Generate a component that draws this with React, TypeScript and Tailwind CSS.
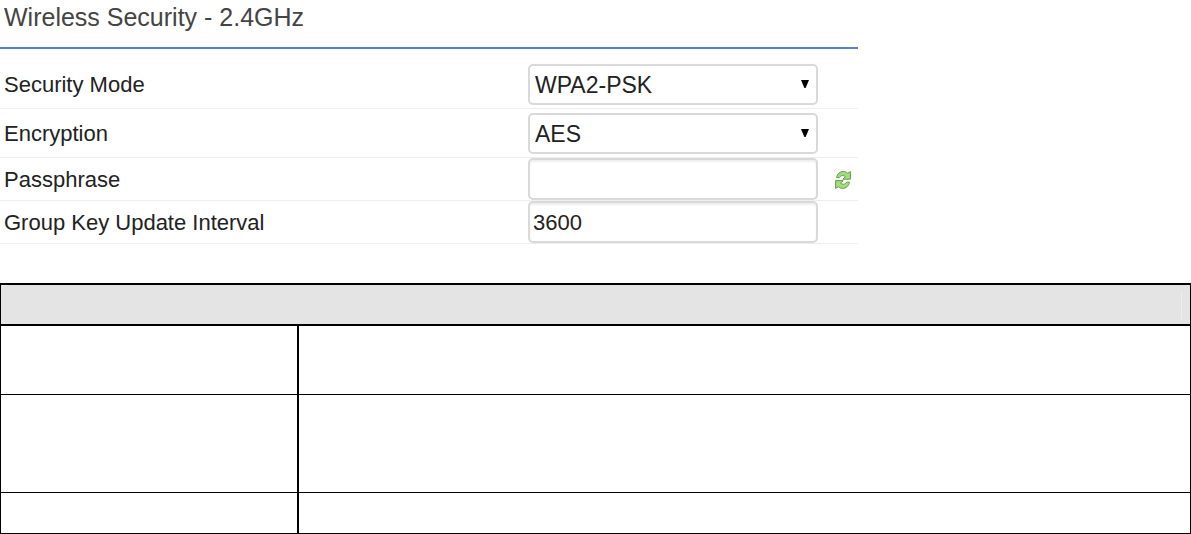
import type { ReactNode } from "react";

function RefreshIcon() {
  return (
    <svg viewBox="0 0 16 20" className="h-5 w-4" aria-hidden="true">
      <g fill="#a5dc7c" stroke="#5f9f4a" strokeWidth="1" strokeLinejoin="round">
        <path d="M1.5 7.6C2.3 3.8 5 1.5 8.4 1.5c1.8 0 3.2.6 4.3 1.7L15.4 1.6V9.2H7.8l2.6-2.5C8.4 5 5.9 5.2 4.4 7.6Z" />
        <path d="M14.5 12.2c-.8 3.8-3.5 6.2-6.9 6.2-1.8 0-3.2-.6-4.3-1.7L.6 18.4v-7.8h7.6l-2.6 2.5c2 1.7 4.5 1.5 6-.9Z" />
      </g>
    </svg>
  );
}

type RowProps = {
  id: string;
  label: string;
  spacing?: string;
  children: ReactNode;
  action?: ReactNode;
};

function Row({ id, label, spacing = "", children, action }: RowProps) {
  return (
    <div className={`flex items-center border-b border-[#eeeeee] ${spacing}`}>
      <label htmlFor={id} className="min-w-0 flex-1 pt-px pl-1 text-[22px]">
        {label}
      </label>
      <div className="w-[290px]">{children}</div>
      <div className="flex w-10 pt-px pl-[17px]">{action}</div>
    </div>
  );
}

function Select({ id, options }: { id: string; options: string[] }) {
  return (
    <div className="relative">
      <select
        id={id}
        className="block h-[41px] w-full appearance-none rounded-[5px] border-2 border-[#d9d9d9] bg-white pr-8 pl-[5px] text-[23px]"
      >
        {options.map((option) => (
          <option key={option}>{option}</option>
        ))}
      </select>
      <svg
        viewBox="0 0 8 8"
        className="pointer-events-none absolute top-4 right-[9px] size-2"
        aria-hidden="true"
      >
        <path d="M0 0h8L4.6 8H3.4Z" fill="#000" />
      </svg>
    </div>
  );
}

const inputClass =
  "block h-[42px] w-full rounded-[5px] border-2 border-[#d9d9d9] bg-white px-[3px] pt-px text-[22px] shadow-[inset_0_2px_2px_#eeeeee]";

export default function App() {
  return (
    <main className="bg-white font-['Liberation_Sans',Arial,sans-serif] leading-7 text-[#222222]">
      <form className="w-full max-w-[858px]">
        <h1 className="border-b-2 border-[#5b7fc0] pt-[3px] pb-4 pl-1 text-[25px] leading-7 text-[#444444]">
          Wireless Security - 2.4GHz
        </h1>
        <Row id="mode" label="Security Mode" spacing="pt-[15px] pb-[3px]">
          <Select id="mode" options={["WPA2-PSK", "WPA-PSK"]} />
        </Row>
        <Row id="encryption" label="Encryption" spacing="pt-1 pb-[3px]">
          <Select id="encryption" options={["AES", "TKIP"]} />
        </Row>
        <Row
          id="passphrase"
          label="Passphrase"
          action={
            <button type="button" aria-label="Generate passphrase">
              <RefreshIcon />
            </button>
          }
        >
          <input id="passphrase" type="text" className={inputClass} />
        </Row>
        <Row id="interval" label="Group Key Update Interval">
          <input id="interval" type="text" defaultValue="3600" className={inputClass} />
        </Row>
      </form>

      <table className="mt-[39px] w-full table-fixed border-separate border-spacing-0 border-x border-t-2 border-black">
        <colgroup>
          <col className="w-[298px]" />
          <col />
        </colgroup>
        <thead>
          <tr>
            <th colSpan={2} className="h-[41px] border-b-2 border-black bg-[#e4e4e4] p-0 pr-2">
              <div className="ml-auto h-7 w-px bg-[#eeeeee]" />
            </th>
          </tr>
        </thead>
        <tbody>
          <tr className="h-[69px]">
            <td className="border-r-2 border-b border-black" />
            <td className="border-b border-black" />
          </tr>
          <tr className="h-[98px]">
            <td className="border-r-2 border-b border-black" />
            <td className="border-b border-black" />
          </tr>
          <tr className="h-[41px]">
            <td className="border-r-2 border-b border-black" />
            <td className="border-b border-black" />
          </tr>
        </tbody>
      </table>
    </main>
  );
}
